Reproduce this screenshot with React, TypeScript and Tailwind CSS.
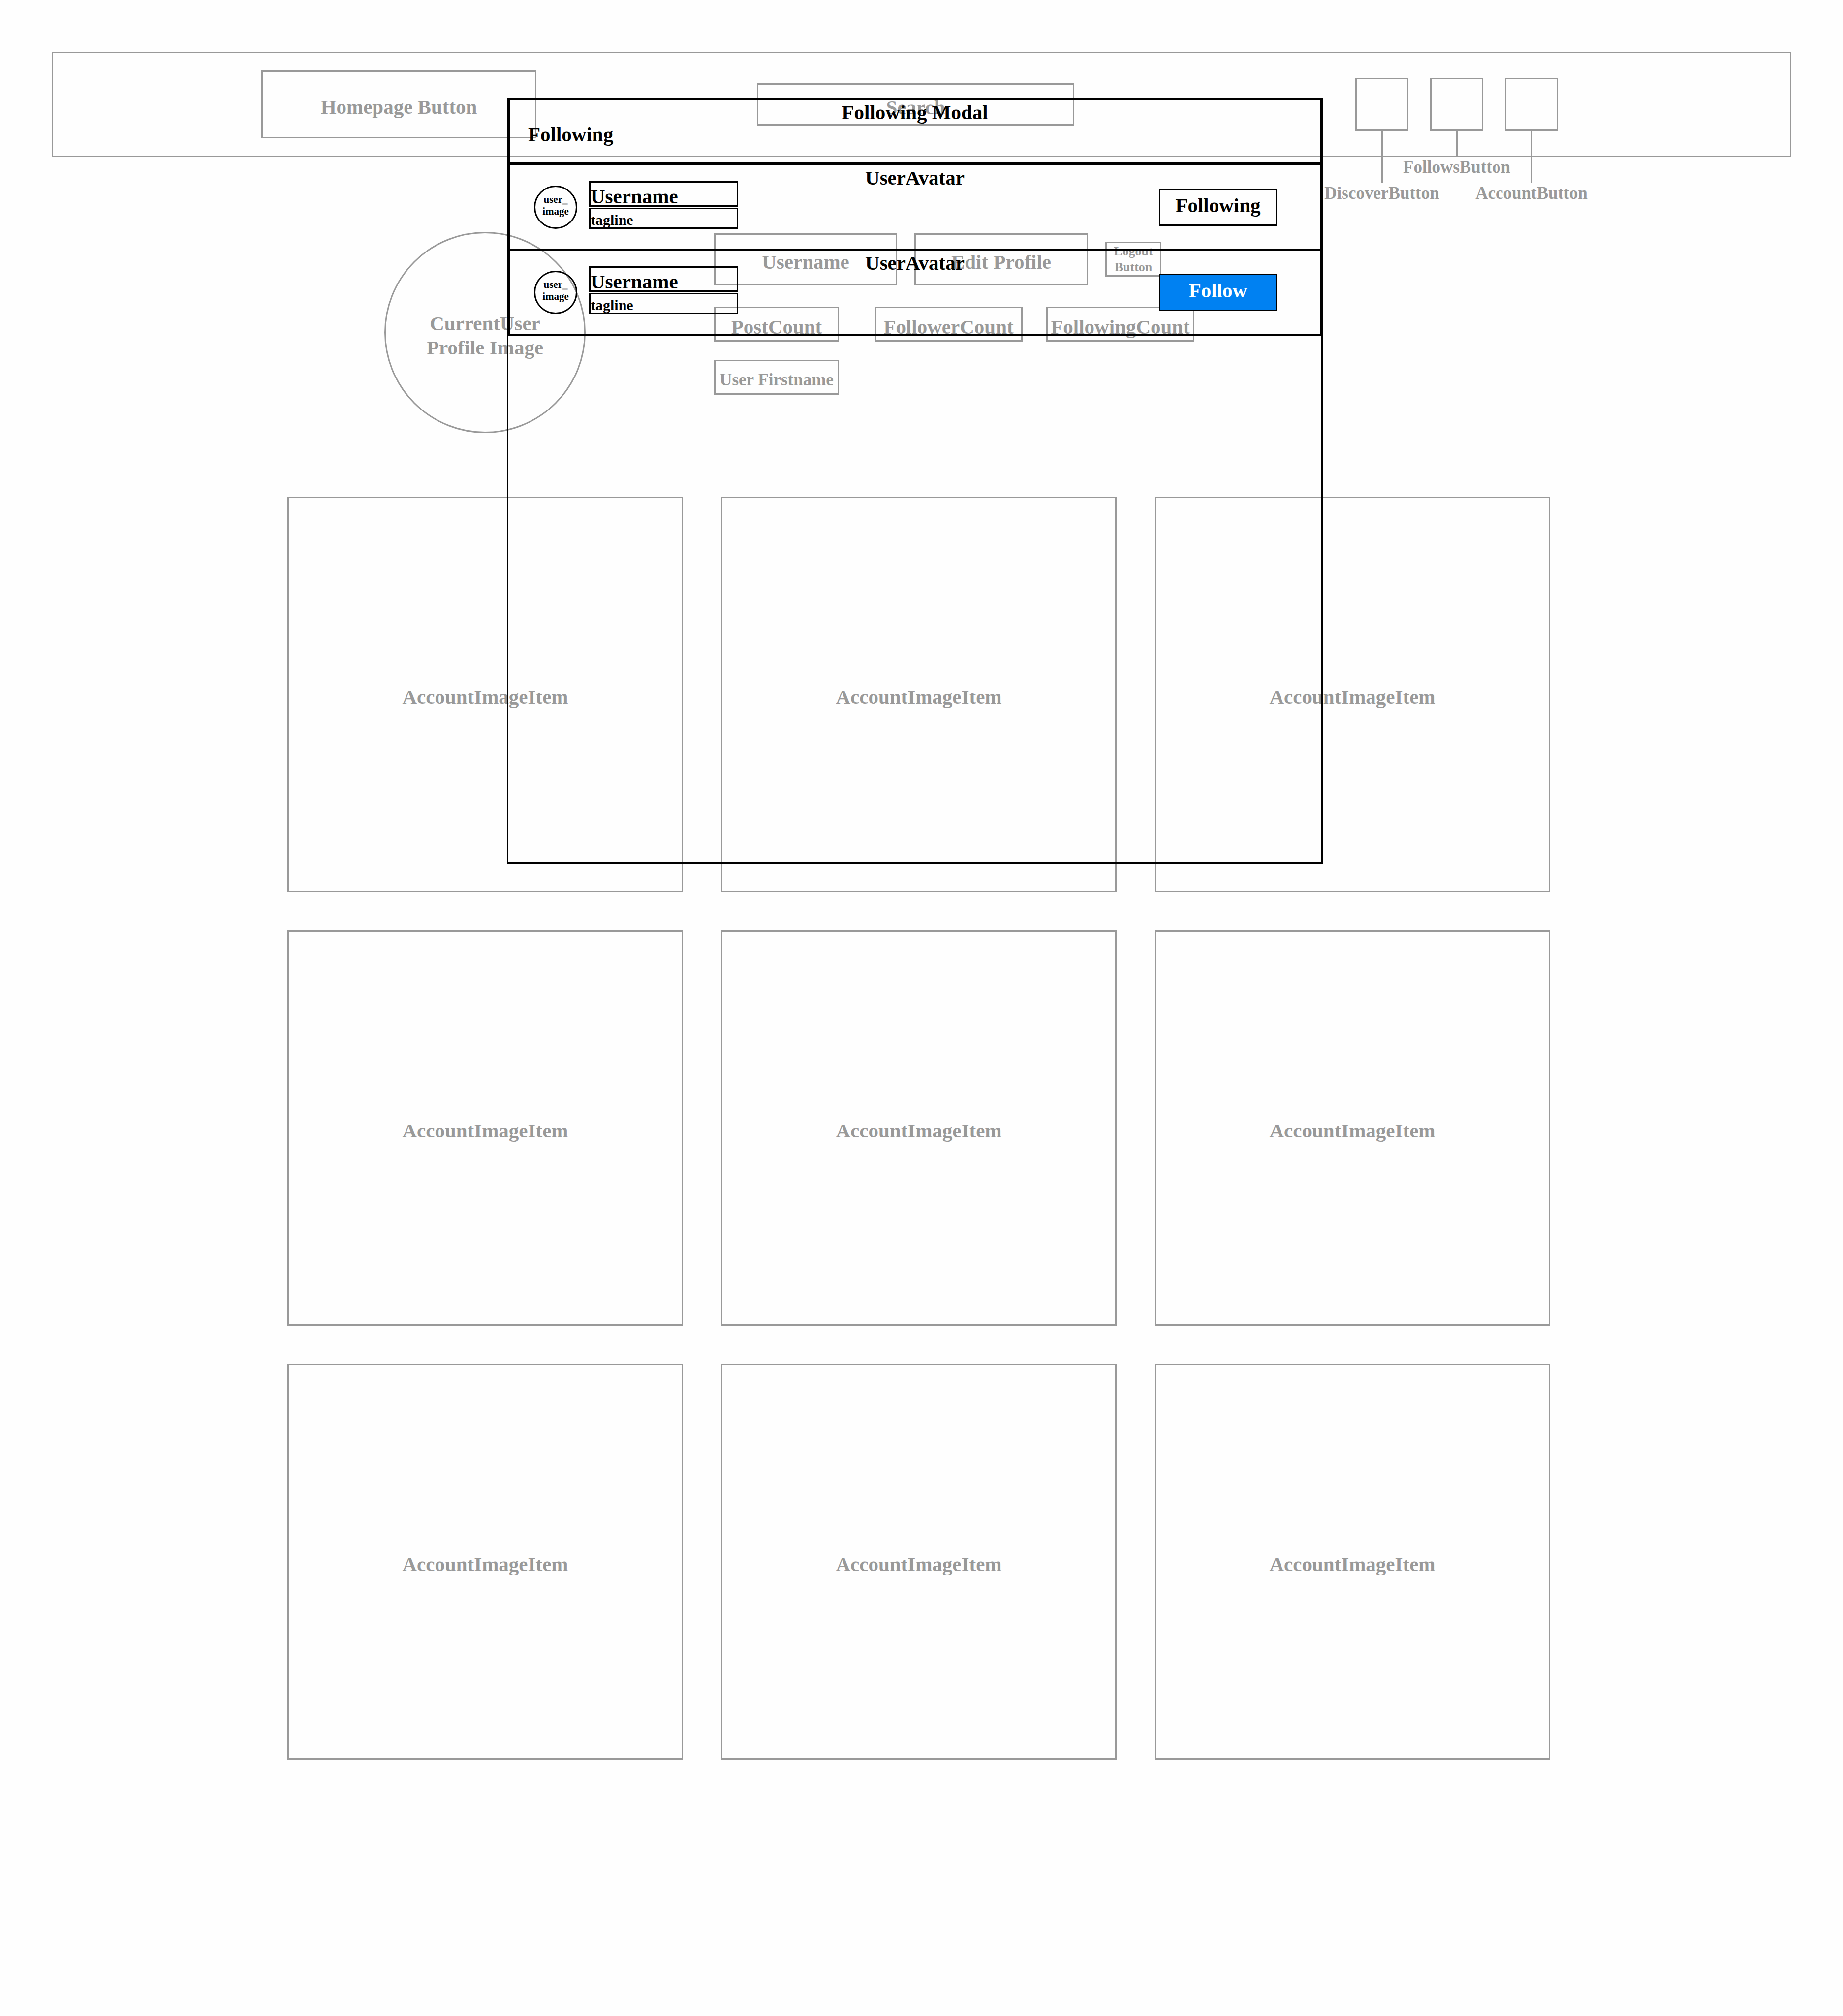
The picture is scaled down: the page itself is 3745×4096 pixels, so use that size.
import React from "react";

const ACCOUNT_IMAGES = Array.from({ length: 9 }, (_, i) => i);

const FOLLOWED_USERS = [
  { id: 1, following: true },
  { id: 2, following: false },
];

type NavButtonProps = { label: string; long?: boolean };

function NavButton({ label, long = false }: NavButtonProps) {
  return (
    <button type="button" className="flex w-[108px] flex-col items-center">
      <span className="size-[108px] shrink-0 border-3 border-[#999999]" />
      <span className={long ? "h-[106px] w-[3px] bg-[#999999]" : "h-[53px] w-[3px] bg-[#999999]"} />
      <span className="text-[35px] leading-[42px] whitespace-nowrap">{label}</span>
    </button>
  );
}

function TopBar() {
  return (
    <header className="flex h-[214px] items-start border-3 border-[#999999] pr-[471px] pl-[423px]">
      <a
        href="#home"
        className="mt-[35px] flex h-[138px] w-[559px] items-center justify-center border-3 border-[#999999] pt-3"
      >
        Homepage Button
      </a>
      <input
        type="text"
        aria-label="Search"
        placeholder="Search"
        className="mt-[61px] mr-[571px] ml-[448px] h-[86px] min-w-0 flex-1 border-3 border-[#999999] bg-transparent pt-3 text-center placeholder:text-[#999999] placeholder:opacity-100"
      />
      <nav className="mt-[50px] flex items-start gap-11">
        <NavButton label="DiscoverButton" long />
        <NavButton label="FollowsButton" />
        <NavButton label="AccountButton" long />
      </nav>
    </header>
  );
}

function Profile() {
  return (
    <section className="mt-[152px] flex items-start gap-[261px] pl-[197px]">
      <div className="flex size-[409px] shrink-0 items-center justify-center rounded-full border-3 border-[#999999] pt-3 text-center leading-[49px]">
        CurrentUser
        <br />
        Profile Image
      </div>
      <div className="pt-[3px]">
        <div className="flex items-center gap-[35px]">
          <h1 className="flex h-[105px] w-[372px] items-center justify-center border-3 border-[#999999] pt-3">
            Username
          </h1>
          <button
            type="button"
            className="flex h-[105px] w-[353px] items-center justify-center border-3 border-[#999999] pt-3"
          >
            Edit Profile
          </button>
          <button
            type="button"
            className="flex h-[71px] w-[114px] items-center justify-center border-3 border-[#999999] text-[26px] leading-8"
          >
            Logout
            <br />
            Button
          </button>
        </div>
        <ul className="mt-11 flex gap-12">
          <li className="mr-6 flex h-[71px] w-[254px] items-center justify-center border-3 border-[#999999] pt-3">
            PostCount
          </li>
          <li className="flex h-[71px] w-[301px] items-center justify-center border-3 border-[#999999] pt-3">
            FollowerCount
          </li>
          <li className="flex h-[71px] w-[301px] items-center justify-center border-3 border-[#999999] pt-3">
            FollowingCount
          </li>
        </ul>
        <p className="mt-[37px] flex h-[71px] w-[254px] items-center justify-center border-3 border-[#999999] pt-3 text-[35px] whitespace-nowrap">
          User Firstname
        </p>
      </div>
    </section>
  );
}

function UserAvatar({ following }: { following: boolean }) {
  return (
    <li className="-mt-[3px] grid h-[176px] grid-cols-[1fr_auto_1fr] border-3 border-black first:mt-0">
      <div className="flex items-end gap-6 self-end pb-[41px] pl-[49px]">
        <div className="flex size-[88px] items-center justify-center rounded-full border-3 border-black pb-2 text-center text-[21px] leading-6">
          user_
          <br />
          image
        </div>
        <div className="flex w-[303px] flex-col gap-0.5">
          <p className="h-[52px] border-3 border-black pt-2 leading-[41px]">Username</p>
          <p className="h-[43px] border-3 border-black pt-[7px] text-[30px] leading-[30px]">tagline</p>
        </div>
      </div>
      <h3 className="pt-[3px] leading-[45px]">UserAvatar</h3>
      <button
        type="button"
        className={
          following
            ? "mr-[87px] flex h-[76px] w-[240px] items-center justify-center self-center justify-self-end border-3 border-black pb-1.5"
            : "mr-[87px] flex h-[76px] w-[240px] items-center justify-center self-center justify-self-end border-3 border-black bg-[#0081f2] pb-1.5 text-white"
        }
      >
        {following ? "Following" : "Follow"}
      </button>
    </li>
  );
}

function FollowingModal() {
  return (
    <div
      role="dialog"
      aria-labelledby="following-modal-title"
      className="absolute top-[200px] right-[1057px] left-[1030px] h-[1555px] border-3 border-black text-black"
    >
      <div className="h-[130px] border-x-3 border-b-3 border-black pt-[3px] leading-[45px]">
        <h2 id="following-modal-title" className="text-center">
          Following Modal
        </h2>
        <p className="pl-[37px]">Following</p>
      </div>
      <ul>
        {FOLLOWED_USERS.map((user) => (
          <UserAvatar key={user.id} following={user.following} />
        ))}
      </ul>
    </div>
  );
}

export default function App() {
  return (
    <div className="relative min-h-screen bg-[#fefefe] px-[105px] pt-[105px] pb-[200px] font-['Liberation_Serif',serif] text-[41px] font-bold text-[#999999]">
      <TopBar />
      <main className="mr-[490px] ml-[479px]">
        <Profile />
        <section aria-label="Account images" className="mt-[129px] grid grid-cols-3 gap-x-[77px] gap-y-[77px]">
          {ACCOUNT_IMAGES.map((i) => (
            <figure
              key={i}
              className="flex aspect-square items-center justify-center border-3 border-[#999999] pt-3"
            >
              AccountImageItem
            </figure>
          ))}
        </section>
      </main>
      <FollowingModal />
    </div>
  );
}
